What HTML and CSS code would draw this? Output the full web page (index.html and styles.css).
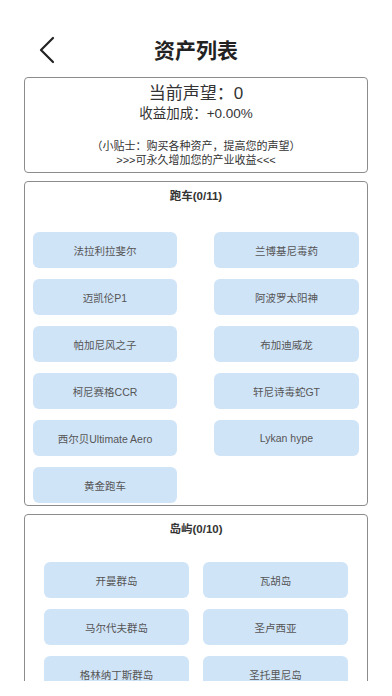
FILE: index.html
```html
<!DOCTYPE html>
<html lang="zh">
<head>
<meta charset="utf-8">
<link rel="stylesheet" href="styles.css">
</head>
<body>
<div class="page">
  <header class="header">
    <span class="back">
      <svg width="18" height="28" viewBox="0 0 18 28"><polyline points="15,2 3,14 15,26" fill="none" stroke="#222" stroke-width="2.2" stroke-linecap="round" stroke-linejoin="round"/></svg>
    </span>
    <h1 class="title">资产列表</h1>
  </header>
  <main class="content">
    <section class="info">
      <div class="fame">当前声望：0</div>
      <div class="bonus">收益加成：+0.00%</div>
      <div class="tip">（小贴士：购买各种资产，提高您的声望）</div>
      <div class="tip">&gt;&gt;&gt;可永久增加您的产业收益&lt;&lt;&lt;</div>
    </section>
    <section class="group cars">
      <div class="group-title">跑车(0/11)</div>
      <div class="grid">
        <div class="item">法拉利拉斐尔</div>
        <div class="item">兰博基尼毒药</div>
        <div class="item">迈凯伦P1</div>
        <div class="item">阿波罗太阳神</div>
        <div class="item">帕加尼风之子</div>
        <div class="item">布加迪威龙</div>
        <div class="item">柯尼赛格CCR</div>
        <div class="item">轩尼诗毒蛇GT</div>
        <div class="item">西尔贝Ultimate Aero</div>
        <div class="item">Lykan hype</div>
        <div class="item">黄金跑车</div>
      </div>
    </section>
    <section class="group islands">
      <div class="group-title">岛屿(0/10)</div>
      <div class="grid">
        <div class="item">开曼群岛</div>
        <div class="item">瓦胡岛</div>
        <div class="item">马尔代夫群岛</div>
        <div class="item">圣卢西亚</div>
        <div class="item">格林纳丁斯群岛</div>
        <div class="item">圣托里尼岛</div>
      </div>
    </section>
  </main>
</div>
</body>
</html>
```
FILE: styles.css
```css
* { box-sizing: border-box; }
html, body { margin: 0; padding: 0; background: #fff; }
body {
  font-family: "Liberation Sans", "Noto Sans CJK SC", sans-serif;
  color: #333;
}
.page { width: 392px; height: 696px; overflow: hidden; }
.header {
  position: relative;
  height: 40px;
  margin-top: 30px;
  display: flex;
  align-items: center;
  justify-content: center;
}
.back {
  position: absolute;
  left: 38px;
  top: 6px;
  display: flex;
}
.title {
  margin: 0;
  font-size: 21px;
  font-weight: 700;
  color: #222;
  line-height: 1;
}
.content {
  height: 611px;
  overflow: hidden;
  padding: 7px 24px 0;
  display: flex;
  flex-direction: column;
  gap: 8px;
}
.info {
  border: 1px solid #8c8c8c;
  border-radius: 4px;
  height: 96px;
  flex-shrink: 0;
  text-align: center;
  padding-top: 5px;
}
.fame { font-size: 17px; line-height: 22px; color: #333; }
.bonus { font-size: 13.5px; line-height: 18px; color: #333; margin-bottom: 16px; }
.tip { font-size: 11px; line-height: 14px; color: #333; }
.group {
  border: 1px solid #8c8c8c;
  border-radius: 4px;
  flex-shrink: 0;
}
.group-title {
  text-align: center;
  font-size: 11.5px;
  font-weight: 700;
  color: #333;
  line-height: 26px;
  margin-top: 1px;
  margin-bottom: 23px;
}
.grid {
  display: grid;
  row-gap: 11px;
}
.cars .grid {
  grid-template-columns: 144px 145px;
  column-gap: 37px;
  padding: 0 0 2px 8px;
}
.islands .grid {
  grid-template-columns: 145px 145px;
  column-gap: 14px;
  padding: 0 0 10px 19px;
}
.islands .group-title { margin-bottom: 20px; }
.item {
  height: 36px;
  border-radius: 6px;
  background: #d0e4f8;
  color: #555;
  font-size: 10.5px;
  display: flex;
  align-items: center;
  justify-content: center;
  white-space: nowrap;
}
```
